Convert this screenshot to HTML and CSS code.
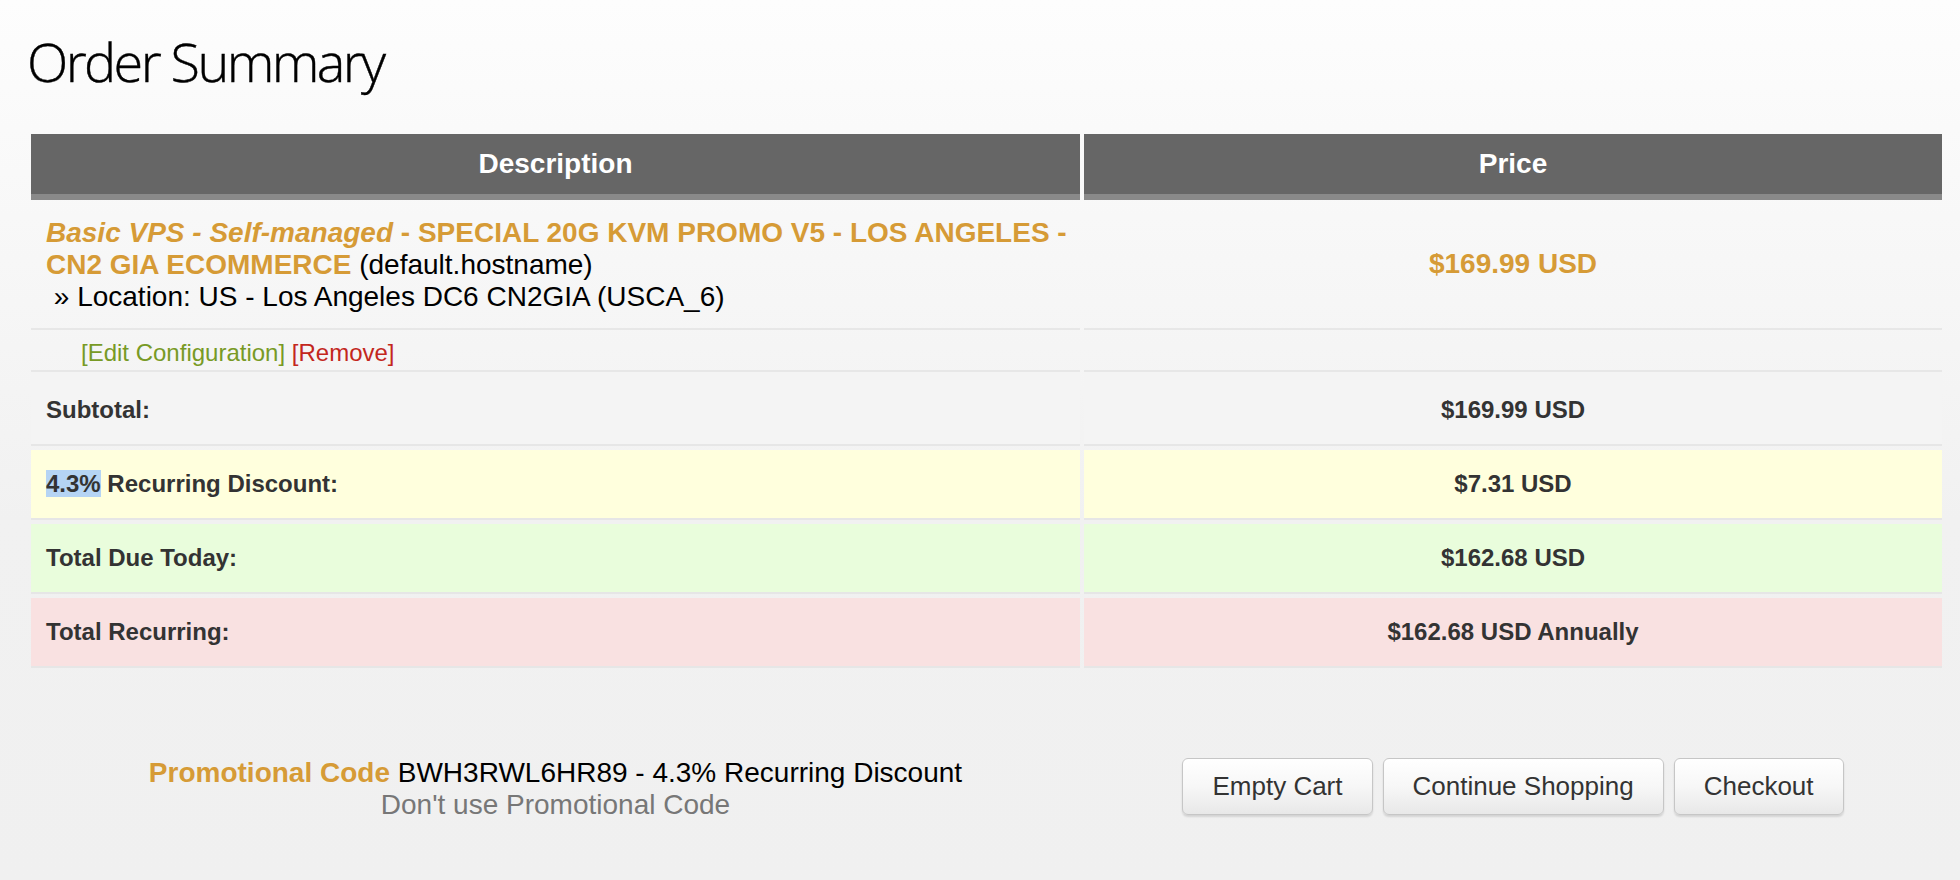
FILE: index.html
```html
<!DOCTYPE html>
<html lang="en">
<head>
<meta charset="utf-8">
<title>Order Summary</title>
<link rel="stylesheet" href="styles.css">
</head>
<body>
<div class="page">
  <h1 class="title">Order Summary</h1>

  <div class="cart">
    <div class="row head">
      <div class="cell">Description</div>
      <div class="cell">Price</div>
    </div>

    <div class="row product">
      <div class="cell desc">
        <span class="pname"><em>Basic VPS - Self-managed</em> - SPECIAL 20G KVM PROMO V5 - LOS ANGELES - CN2 GIA ECOMMERCE</span> (default.hostname)<br>
        &nbsp;» Location: US - Los Angeles DC6 CN2GIA (USCA_6)
      </div>
      <div class="cell amount">$169.99 USD</div>
    </div>

    <div class="row edit">
      <div class="cell desc"><a class="edit-link">[Edit Configuration]</a> <a class="remove-link">[Remove]</a></div>
      <div class="cell"></div>
    </div>

    <div class="row sum subtotal">
      <div class="cell label"><span>Subtotal:</span></div>
      <div class="cell value"><span>$169.99 USD</span></div>
    </div>
    <div class="row sum discount">
      <div class="cell label"><span><span class="sel">4.3%</span> Recurring Discount:</span></div>
      <div class="cell value"><span>$7.31 USD</span></div>
    </div>
    <div class="row sum due">
      <div class="cell label"><span>Total Due Today:</span></div>
      <div class="cell value"><span>$162.68 USD</span></div>
    </div>
    <div class="row sum recurring">
      <div class="cell label"><span>Total Recurring:</span></div>
      <div class="cell value"><span>$162.68 USD Annually</span></div>
    </div>
  </div>

  <div class="actions">
    <div class="promo">
      <div><strong class="promo-label">Promotional Code</strong> BWH3RWL6HR89 - 4.3% Recurring Discount</div>
      <a class="promo-remove">Don't use Promotional Code</a>
    </div>
    <div class="buttons">
      <button class="btn" type="button">Empty Cart</button>
      <button class="btn" type="button">Continue Shopping</button>
      <button class="btn" type="button">Checkout</button>
    </div>
  </div>
</div>
</body>
</html>
```

FILE: styles.css
```css
html, body {
  margin: 0;
  padding: 0;
}

body {
  width: 1960px;
  height: 880px;
  overflow: hidden;
  font-family: "Liberation Sans", Arial, Helvetica, sans-serif;
  color: #000;
  background: #f0f0f0 linear-gradient(to bottom, #fdfdfd 0px, #f1f1f1 520px, #f0f0f0 880px) no-repeat;
}

.page {
  padding: 29px 0 0 0;
}

.title {
  margin: 0 0 41px 27px;
  font-family: "Open Sans", "Noto Sans", sans-serif;
  font-weight: 300;
  font-size: 54px;
  line-height: 64px;
  color: #000;
  letter-spacing: -2.6px;
  -webkit-text-stroke: 0.4px #000;
}

.cart {
  margin-left: 31px;
  width: 1911px;
}

.row {
  display: grid;
  grid-template-columns: 1049px 858px;
  column-gap: 4px;
}

/* header */
.head .cell {
  height: 60px;
  line-height: 60px;
  background: #666666;
  border-bottom: 6px solid #898989;
  color: #fff;
  font-weight: bold;
  font-size: 28px;
  text-align: center;
}

/* product */
.product .cell {
  border-bottom: 2px solid #e7e7e7;
  font-size: 28px;
  line-height: 32px;
}

.product .desc {
  padding: 17px 0 15px 15px;
}

.pname {
  color: #d69b36;
  font-weight: bold;
}

.pname em {
  font-style: italic;
}

.product .amount {
  display: flex;
  align-items: center;
  justify-content: center;
  color: #d69b36;
  font-weight: bold;
}

.edit .cell {
  height: 33px;
  padding-top: 7px;
  border-bottom: 2px solid #e7e7e7;
  font-size: 24px;
  line-height: 32px;
}

.edit .desc {
  padding-left: 50px;
}

.edit-link {
  color: #789a25;
}

.remove-link {
  color: #c3271d;
}

/* totals */
.sum {
  margin-bottom: 4px;
}

.sum .cell {
  height: 68px;
  display: flex;
  align-items: center;
  border-bottom: 2px solid #e6e6e6;
  font-size: 24px;
  font-weight: bold;
  color: #333;
}

.sum .label {
  padding-left: 15px;
}

.sum .value {
  justify-content: center;
}

.subtotal .cell {
  padding-top: 4px;
  background: #f4f4f4;
}

.discount .cell {
  background: #ffffdd;
}

.due .cell {
  background: #e9fddc;
}

.recurring .cell {
  background: #f9e1e1;
}

.sel {
  background: #b5d4f4;
}

/* bottom actions */
.actions {
  margin: 89px 0 0 31px;
  width: 1911px;
  display: grid;
  grid-template-columns: 1049px 858px;
  column-gap: 4px;
}

.promo {
  text-align: center;
  font-size: 28px;
  line-height: 32px;
  color: #000;
}

.promo-label {
  color: #d69b36;
}

.promo-remove {
  display: block;
  color: #777;
}

.buttons {
  display: flex;
  justify-content: center;
  gap: 10px;
  padding-top: 1px;
}

.btn {
  height: 57px;
  padding: 0 29px;
  font-family: "Liberation Sans", Arial, Helvetica, sans-serif;
  font-size: 26px;
  color: #333;
  background: linear-gradient(to bottom, #ffffff 0%, #f7f7f7 50%, #e8e8e8 100%);
  border: 1px solid #c6c6c6;
  border-radius: 6px;
  box-shadow: 0 2px 2px rgba(0, 0, 0, 0.12);
}
```
